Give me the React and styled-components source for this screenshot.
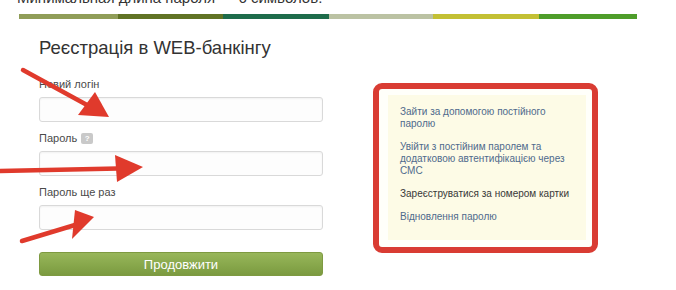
import React from "react";
import styled, { createGlobalStyle } from "styled-components";

const GlobalStyle = createGlobalStyle`
  body {
    margin: 0;
    background: #fff;
    font-family: "Liberation Sans", Arial, sans-serif;
  }
`;

const stripes = [
  { color: "#909d58", w: 99 },
  { color: "#617325", w: 105 },
  { color: "#1e6c4b", w: 106 },
  { color: "#bbc2a3", w: 104 },
  { color: "#c3c034", w: 106 },
  { color: "#4e9d2a", w: 98 },
];

const links = [
  { text: "Зайти за допомогою постійного паролю" },
  { text: "Увійти з постійним паролем та додатковою автентифікацією через СМС" },
  { text: "Зареєструватися за номером картки", dark: true },
  { text: "Відновлення паролю" },
];

function App() {
  return (
    <Page>
      <GlobalStyle />
      <Notice>Минимальная длина пароля — 6 символов.</Notice>
      <Stripe>
        {stripes.map((s) => (
          <Segment key={s.color} $color={s.color} $w={s.w} />
        ))}
      </Stripe>

      <Main>
        <FormCol>
          <Title>Реєстрація в WEB-банкінгу</Title>

          <Label>Новий логін</Label>
          <Input type="text" />

          <Label>
            Пароль <Hint>?</Hint>
          </Label>
          <Input type="password" />

          <Label>Пароль ще раз</Label>
          <Input type="password" $last />

          <Button>Продовжити</Button>
        </FormCol>

        <Frame>
          <LinksBox>
            {links.map((l) => (
              <LinkItem key={l.text} $dark={l.dark}>
                {l.text}
              </LinkItem>
            ))}
          </LinksBox>
        </Frame>
      </Main>

      {/* red annotation arrows */}
      <Arrows width="676" height="290" viewBox="0 0 676 290">
        <g stroke="#e03a2c" strokeWidth="4.5" strokeLinecap="round" fill="#e03a2c">
          <line x1="23" y1="70" x2="87" y2="105" />
          <polygon points="95,92 109,117 78,115" stroke="none" />
          <line x1="-4" y1="171" x2="118" y2="168.5" />
          <polygon points="115,155 143,167 117,182" stroke="none" />
          <line x1="22" y1="241" x2="75" y2="225" />
          <polygon points="75,210 94,217 72,239" stroke="none" />
        </g>
      </Arrows>
    </Page>
  );
}

export default App;

const Page = styled.div`
  position: relative;
  width: 676px;
  height: 290px;
  overflow: hidden;
`;

const Notice = styled.div`
  margin-top: -11px;
  padding-left: 17px;
  font-size: 15px;
  line-height: 18px;
  color: #333;
  white-space: nowrap;
`;

const Stripe = styled.div`
  display: flex;
  margin: 7px 0 0 19px;
  height: 5px;
`;

const Segment = styled.div`
  width: ${(p) => p.$w}px;
  background: ${(p) => p.$color};
`;

const Main = styled.div`
  display: flex;
  align-items: flex-start;
  gap: 50px;
  padding-left: 39px;
  margin-top: 18px;
`;

const FormCol = styled.div`
  display: flex;
  flex-direction: column;
  width: 284px;
`;

const Title = styled.h1`
  margin: 0 0 19px;
  font-size: 18.5px;
  line-height: 22px;
  font-weight: normal;
  color: #333;
`;

const Label = styled.label`
  display: flex;
  align-items: center;
  gap: 4px;
  font-size: 11px;
  line-height: 13px;
  margin-bottom: 6px;
  color: #4a4a4a;
`;

const Hint = styled.span`
  display: inline-flex;
  align-items: center;
  justify-content: center;
  width: 12px;
  height: 11px;
  border-radius: 2px;
  background: #c9c9c9;
  color: #fff;
  font-size: 8px;
  font-weight: bold;
`;

const Input = styled.input`
  box-sizing: border-box;
  height: 25px;
  width: 100%;
  margin: 0 0 ${(p) => (p.$last ? 22 : 10)}px;
  border: 1px solid #d9d9d9;
  border-radius: 3px;
  background: #fdfdfd;
  box-shadow: inset 0 1px 2px rgba(0, 0, 0, 0.05);
`;

const Button = styled.button`
  height: 24px;
  width: 100%;
  border: 1px solid #7e9a41;
  border-radius: 3px;
  background: linear-gradient(#98b65a, #86a64a 60%, #7b9a40);
  color: #fff;
  font-family: "Liberation Sans", Arial, sans-serif;
  font-size: 13px;
  padding: 0;
`;

const Frame = styled.div`
  box-sizing: border-box;
  margin-top: 46px;
  width: 225px;
  height: 170px;
  border: 6px solid #d93c33;
  border-radius: 9px;
  padding: 6px 6px 7px 9px;
  background: #fffffa;
`;

const LinksBox = styled.div`
  box-sizing: border-box;
  height: 100%;
  padding: 11px 10px 0 12px;
  background: #fdfbe6;
`;

const LinkItem = styled.div`
  width: 172px;
  font-size: 10px;
  line-height: 12px;
  margin-bottom: 11px;
  color: ${(p) => (p.$dark ? "#383838" : "#4f6a8c")};
`;

const Arrows = styled.svg`
  position: absolute;
  left: 0;
  top: 0;
  pointer-events: none;
`;
